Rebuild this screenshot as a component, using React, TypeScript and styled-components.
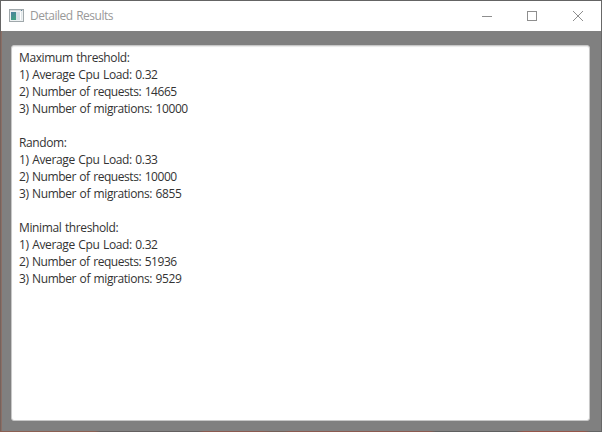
import React from 'react';
import styled, { createGlobalStyle } from 'styled-components';

const GlobalStyle = createGlobalStyle`
  * { box-sizing: border-box; }
  html, body, #root { margin: 0; height: 100%; }
  body { overflow: hidden; font-family: 'Open Sans', 'Noto Sans', sans-serif; }
`;

const Window = styled.div`
  display: flex;
  flex-direction: column;
  width: 602px;
  height: 432px;
  border: 1px solid transparent;
  background:
    linear-gradient(#808080, #808080) padding-box,
    linear-gradient(#646464, #646464) 0 0 / 100% 1px no-repeat border-box,
    linear-gradient(90deg, #8b6053 0 95px, #646060 100px 198px, #8b5a50 204px 262px, #756058 272px 284px, #8b5a50 290px 430px, #606060 436px 516px, #95564a 524px 584px, #646464 590px) 0 100% / 100% 1px no-repeat border-box,
    linear-gradient(#686868, #686868) 100% 0 / 1px 100% no-repeat border-box,
    linear-gradient(#666 30px, #76625c 34px) 0 0 / 1px 100% no-repeat border-box;
`;

const TitleBar = styled.header`
  display: flex;
  align-items: center;
  flex: 0 0 30px;
  padding-left: 8px;
  background: #fff;
`;

const Title = styled.h1`
  flex: 1;
  margin: 0 0 0 6px;
  font-size: 12px;
  font-weight: 400;
  line-height: 16px;
  letter-spacing: -0.48px;
  word-spacing: 0.8px;
  color: #999;
`;

const WindowButton = styled.button<{ $width: number }>`
  display: flex;
  align-items: center;
  justify-content: center;
  width: ${(p) => p.$width}px;
  height: 30px;
  padding: 0;
  border: 0;
  background: transparent;
  color: #8e8e8e;
`;

const Content = styled.main`
  flex: 1;
  display: flex;
  padding: 14px 11px 10px 9px;
  border-left: 1px solid #8b6f66;
`;

const ResultsPanel = styled.section`
  flex: 1;
  padding: 3px 7px;
  background: #fff;
  border: 1px solid #c8c8c8;
  border-radius: 3px;
  box-shadow: inset 0 1px 1px #e9e9e9;
`;

const Group = styled.div`
  margin-bottom: 17px;
`;

const Line = styled.div<{ $spacing?: number }>`
  height: 17px;
  font-size: 12px;
  line-height: 17px;
  white-space: pre;
  letter-spacing: ${(p) => p.$spacing ?? -0.41}px;
  word-spacing: 0.8px;
  color: #333;
`;

const IconFrame = styled.svg`
  flex: none;
  display: block;
  margin-bottom: 1px;
`;

const AppIcon = () => (
  <IconFrame width="15" height="13" viewBox="0 0 15 13" shapeRendering="crispEdges">
    <defs>
      <linearGradient id="pane" x1="0" y1="0" x2="0.5" y2="1">
        <stop offset="0" stopColor="#4c7fa0" />
        <stop offset="1" stopColor="#3fa083" />
      </linearGradient>
    </defs>
    <rect x="0" y="0" width="15" height="13" fill="#a0a8ab" />
    <rect x="1" y="1" width="13" height="11" fill="#eef2f3" />
    <rect x="1" y="1" width="13" height="1" fill="#d5dadd" />
    <rect x="2" y="3" width="5" height="8" fill="url(#pane)" />
    <rect x="7" y="3" width="4" height="8" fill="#d5e0e6" />
    <rect x="11" y="3" width="1" height="8" fill="#fff" />
    <rect x="12" y="3" width="1" height="8" fill="#dfe5e8" />
    <rect x="12" y="1" width="1" height="1" fill="#5c8298" />
  </IconFrame>
);

const groups = [
  { name: 'Maximum threshold:', load: '0.32', requests: '14665', migrations: '10000' },
  { name: 'Random:', load: '0.33', requests: '10000', migrations: '6855' },
  { name: 'Minimal threshold:', load: '0.32', requests: '51936', migrations: '9529' },
];

export default function App() {
  return (
    <>
      <GlobalStyle />
      <Window>
        <TitleBar>
          <AppIcon />
          <Title>Detailed Results</Title>
          <WindowButton $width={45} aria-label="Minimize">
            <svg width="10" height="10" shapeRendering="crispEdges">
              <path d="M0 5.5H10" stroke="currentColor" />
            </svg>
          </WindowButton>
          <WindowButton $width={46} aria-label="Maximize">
            <svg width="10" height="10" shapeRendering="crispEdges">
              <rect x="0.5" y="0.5" width="9" height="9" fill="none" stroke="currentColor" />
            </svg>
          </WindowButton>
          <WindowButton $width={46} aria-label="Close">
            <svg width="10" height="10">
              <path d="M0 0L10 10M10 0L0 10" stroke="currentColor" />
            </svg>
          </WindowButton>
        </TitleBar>
        <Content>
          <ResultsPanel>
            {groups.map((g) => (
              <Group key={g.name}>
                <Line $spacing={-0.38}>{g.name}</Line>
                <Line $spacing={-0.37}>1) Average Cpu Load: {g.load}</Line>
                <Line $spacing={-0.44}>2) Number of requests: {g.requests}</Line>
                <Line>3) Number of migrations: {g.migrations}</Line>
              </Group>
            ))}
          </ResultsPanel>
        </Content>
      </Window>
    </>
  );
}
